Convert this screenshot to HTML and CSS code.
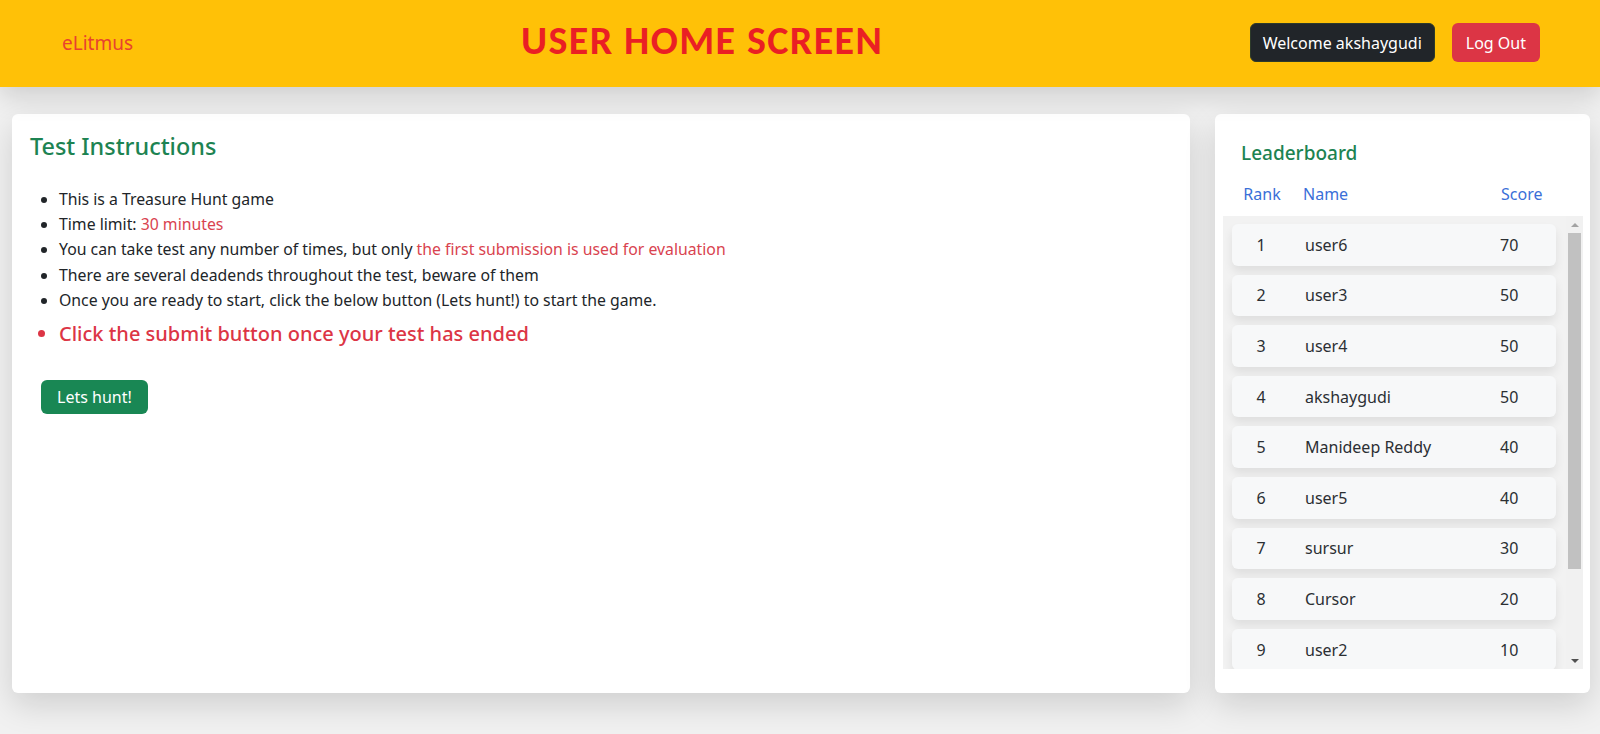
FILE: index.html
```html
<!DOCTYPE html>
<html lang="en">
<head>
<meta charset="utf-8">
<title>User Home Screen</title>
<link rel="stylesheet" href="styles.css">
</head>
<body>
<header class="topbar">
  <a class="brand" href="#">eLitmus</a>
  <h1 class="title">USER HOME SCREEN</h1>
  <div class="actions">
    <button class="btn btn-dark">Welcome akshaygudi</button>
    <button class="btn btn-red">Log Out</button>
  </div>
</header>
<main class="layout">
  <section class="card instructions">
    <h3 class="card-title">Test Instructions</h3>
    <ul class="rules">
      <li>This is a Treasure Hunt game</li>
      <li>Time limit: <span class="hl">30 minutes</span></li>
      <li>You can take test any number of times, but only <span class="hl">the first submission is used for evaluation</span></li>
      <li>There are several deadends throughout the test, beware of them</li>
      <li>Once you are ready to start, click the below button (Lets hunt!) to start the game.</li>
      <li class="big">Click the submit button once your test has ended</li>
    </ul>
    <button class="btn btn-green">Lets hunt!</button>
  </section>
  <aside class="card board">
    <h5 class="board-title">Leaderboard</h5>
    <div class="board-head">
      <span class="c-rank">Rank</span>
      <span class="c-name">Name</span>
      <span class="c-score">Score</span>
    </div>
    <div class="board-list">
      <div class="rows">
        <div class="row"><span class="c-rank">1</span><span class="c-name">user6</span><span class="c-score">70</span></div>
        <div class="row"><span class="c-rank">2</span><span class="c-name">user3</span><span class="c-score">50</span></div>
        <div class="row"><span class="c-rank">3</span><span class="c-name">user4</span><span class="c-score">50</span></div>
        <div class="row"><span class="c-rank">4</span><span class="c-name">akshaygudi</span><span class="c-score">50</span></div>
        <div class="row"><span class="c-rank">5</span><span class="c-name">Manideep Reddy</span><span class="c-score">40</span></div>
        <div class="row"><span class="c-rank">6</span><span class="c-name">user5</span><span class="c-score">40</span></div>
        <div class="row"><span class="c-rank">7</span><span class="c-name">sursur</span><span class="c-score">30</span></div>
        <div class="row"><span class="c-rank">8</span><span class="c-name">Cursor</span><span class="c-score">20</span></div>
        <div class="row"><span class="c-rank">9</span><span class="c-name">user2</span><span class="c-score">10</span></div>
      </div>
      <div class="scrollbar">
        <span class="sb-btn"><span class="tri-up"></span></span>
        <span class="sb-thumb"></span>
        <span class="sb-btn sb-end"><span class="tri-down"></span></span>
      </div>
    </div>
  </aside>
</main>
</body>
</html>
```
FILE: styles.css
```css
* { box-sizing: border-box; }
html, body { height: 100%; }
body {
  margin: 0;
  background: #f1f1f1;
  font-family: "Noto Sans", "Open Sans", sans-serif;
  font-size: 16px;
  color: #212529;
  overflow: hidden;
}
.topbar {
  position: relative;
  z-index: 2;
  height: 87px;
  background: #ffc107;
  display: flex;
  align-items: center;
  padding: 0 60px 0 62px;
  box-shadow: 0 10px 24px rgba(0, 0, 0, 0.14);
}
.brand {
  color: #e8412f;
  text-decoration: none;
  font-size: 19px;
  width: 72px;
  margin-top: -1px;
}
.title {
  margin: -5px 0 0 387px;
  font-family: "Carlito", "Lato", sans-serif;
  font-weight: 700;
  font-size: 40px;
  letter-spacing: 1.4px;
  color: #ea1f24;
  line-height: 1;
}
.actions {
  margin-left: auto;
  display: flex;
  gap: 17px;
  margin-top: -2px;
}
.btn {
  font-family: inherit;
  font-size: 16px;
  line-height: 24px;
  border-radius: 6px;
  border: 1px solid transparent;
  color: #fff;
  cursor: pointer;
}
.btn-dark {
  background: #212529;
  border-color: #2d3a2a;
  height: 39px;
  padding: 0 12px;
}
.btn-red {
  background: #dc3545;
  height: 39px;
  padding: 0 13px;
}
.btn-green {
  background: #198754;
  height: 34px;
  padding: 0 15px;
  margin-left: 13px;
}
.layout {
  display: grid;
  grid-template-columns: 1178px 375px;
  gap: 25px;
  padding: 27px 0 0 12px;
}
.card {
  background: #fff;
  border-radius: 6px;
  height: 579px;
  box-shadow: 0 12px 32px rgba(0, 0, 0, 0.14);
}
.instructions {
  padding: 18px 16px;
}
.card-title {
  margin: 0 0 26px 2px;
  font-size: 23.4px;
  font-weight: 500;
  line-height: 29px;
  color: #1d8352;
}
.rules {
  margin: 0 0 31px;
  padding-left: 31px;
  font-size: 15.8px;
  line-height: 25.2px;
}
.rules .hl { color: #d9434f; }
.rules .big {
  color: #dc3545;
  font-size: 20px;
  font-weight: 500;
  line-height: 30px;
  margin-top: 6px;
}
.board {
  padding: 8px 7px 24px 8px;
  display: flex;
  flex-direction: column;
}
.board-title {
  margin: 0;
  padding: 19px 0 0 18px;
  font-size: 19px;
  font-weight: 500;
  line-height: 24px;
  color: #1d8352;
}
.board-head {
  display: grid;
  grid-template-columns: 58px 1fr 56px;
  padding: 0 27px 0 10px;
  margin: 17px 0 10px;
  line-height: 24px;
  color: #3a6fd8;
}
.board-head .c-name { padding-left: 12px; }
.board-head .c-score { padding-left: 1px; }
.c-rank { text-align: center; }
.c-name { padding-left: 15px; }
.board-list {
  height: 453px;
  display: flex;
  background: #f2f2f2;
}
.rows {
  flex: 1;
  min-width: 0;
  overflow: hidden;
  padding: 8px 10px 0 9px;
  display: flex;
  flex-direction: column;
  gap: 9px;
}
.row {
  flex: none;
  display: grid;
  grid-template-columns: 58px 1fr 56px;
  height: 41.6px;
  align-items: center;
  background: #f7f8f9;
  border-radius: 6px;
  box-shadow: 0 6px 10px rgba(0, 0, 0, 0.08);
  color: #2b2f33;
}
.scrollbar {
  width: 17px;
  flex: none;
  display: flex;
  flex-direction: column;
  background: #f1f1f1;
}
.sb-btn {
  height: 17px;
  display: flex;
  align-items: center;
  justify-content: center;
}
.sb-end { margin-top: auto; }
.tri-up {
  width: 0;
  height: 0;
  border-left: 4px solid transparent;
  border-right: 4px solid transparent;
  border-bottom: 4px solid #a3a3a3;
}
.tri-down {
  width: 0;
  height: 0;
  border-left: 4px solid transparent;
  border-right: 4px solid transparent;
  border-top: 4px solid #505050;
}
.sb-thumb {
  height: 336px;
  margin: 0 2px;
  background: #c1c1c1;
}
```
